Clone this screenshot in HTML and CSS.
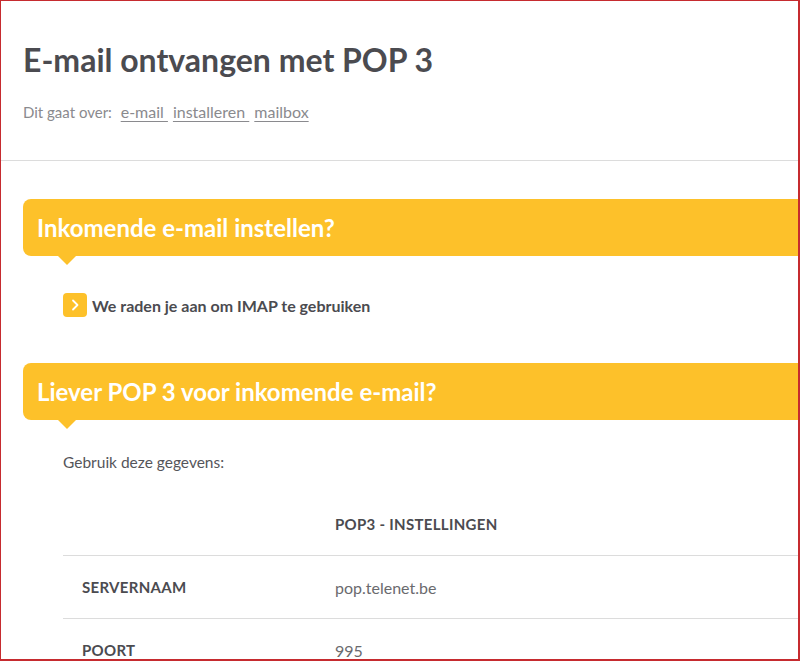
FILE: index.html
```html
<!DOCTYPE html>
<html lang="nl">
<head>
  <meta charset="UTF-8" />
  <meta name="viewport" content="width=device-width, initial-scale=1.0"/>
  <title>E-mail ontvangen met POP 3</title>
  <link rel="stylesheet" href="styles.css">
</head>
<body>
  <div class="frame">

    <header class="page-head">
      <h1>E-mail ontvangen met POP 3</h1>
      <p class="tags">
        Dit gaat over:
        <a href="#">e-mail </a>
        <a href="#">installeren </a>
        <a href="#">mailbox</a>
      </p>
    </header>

    <main>
      <section class="block">
        <h2 class="bubble">Inkomende e-mail instellen?</h2>
        <a class="arrow-link" href="#">
          <span class="arrow-icon">
            <svg width="14" height="14" viewBox="0 0 14 14"><path d="M5 2.5 L9.5 7 L5 11.5" fill="none" stroke="#fff" stroke-width="1.8" stroke-linecap="round" stroke-linejoin="round"/></svg>
          </span>
          We raden je aan om IMAP te gebruiken
        </a>
      </section>

      <section class="block">
        <h2 class="bubble">Liever POP 3 voor inkomende e-mail?</h2>
        <p class="intro">Gebruik deze gegevens:</p>

        <table class="settings">
          <thead>
            <tr>
              <th></th>
              <th>POP3 - INSTELLINGEN</th>
            </tr>
          </thead>
          <tbody>
            <tr>
              <th>SERVERNAAM</th>
              <td>pop.telenet.be</td>
            </tr>
            <tr>
              <th>POORT</th>
              <td>995</td>
            </tr>
          </tbody>
        </table>
      </section>
    </main>

  </div>
</body>
</html>
```

FILE: styles.css
```css
html, body {
  margin: 0;
  height: 100%;
  overflow: hidden;
}

body {
  font-family: 'Lato', 'Open Sans', sans-serif;
  background-color: #fff;
  color: #4b4b50;
}

.frame {
  box-sizing: border-box;
  width: 800px;
  height: 661px;
  border: 1px solid #c62b2f;
  border-right-width: 2px;
  border-bottom-width: 2px;
  overflow: hidden;
}

.page-head {
  padding: 40px 0 38px 22px;
  border-bottom: 1px solid #dcdcdc;
}

.page-head h1 {
  margin: 0;
  font-size: 32px;
  font-weight: 700;
  line-height: 38px;
  color: #4b4b50;
}

.tags {
  margin: 23px 0 0;
  font-size: 15px;
  line-height: 20px;
  color: #8a8a8e;
}

.tags a {
  color: #8a8a8e;
  margin-left: 5px;
  font-size: 16px;
  text-decoration: underline;
  text-underline-offset: 3px;
}

main {
  padding: 38px 0 0 22px;
}

.bubble {
  position: relative;
  margin: 0;
  height: 57px;
  padding-left: 14px;
  display: flex;
  align-items: center;
  background-color: #fdc12a;
  border-radius: 8px 0 0 8px;
  color: #fff;
  font-size: 24px;
  font-weight: 700;
}

.bubble::after {
  content: "";
  position: absolute;
  left: 35px;
  bottom: -9px;
  border-left: 9px solid transparent;
  border-right: 9px solid transparent;
  border-top: 9px solid #fdc12a;
}

.arrow-link {
  display: flex;
  align-items: center;
  gap: 5px;
  margin: 37px 0 46px 40px;
  color: #4b4b50;
  font-size: 16px;
  font-weight: 700;
  text-decoration: none;
}

.arrow-icon {
  width: 24px;
  height: 24px;
  border-radius: 4px;
  background-color: #fdc12a;
  display: flex;
  align-items: center;
  justify-content: center;
}

.intro {
  margin: 33px 0 0 40px;
  font-size: 15.5px;
  color: #55555a;
}

.settings {
  margin: 22px 0 0 40px;
  width: 738px;
  border-collapse: collapse;
  font-size: 16px;
}

.settings th,
.settings td {
  text-align: left;
  height: 62px;
  padding: 0;
  vertical-align: middle;
}

.settings thead th {
  font-size: 15px;
  font-weight: 700;
  letter-spacing: 0.3px;
  color: #4b4b50;
  border-bottom: 1px solid #dcdcdc;
}

.settings tbody tr {
  border-bottom: 1px solid #dcdcdc;
}

.settings tbody th {
  width: 253px;
  padding-left: 19px;
  font-size: 15px;
  font-weight: 700;
  letter-spacing: 0.3px;
  color: #4b4b50;
}

.settings td {
  color: #6a6a6e;
}
```
